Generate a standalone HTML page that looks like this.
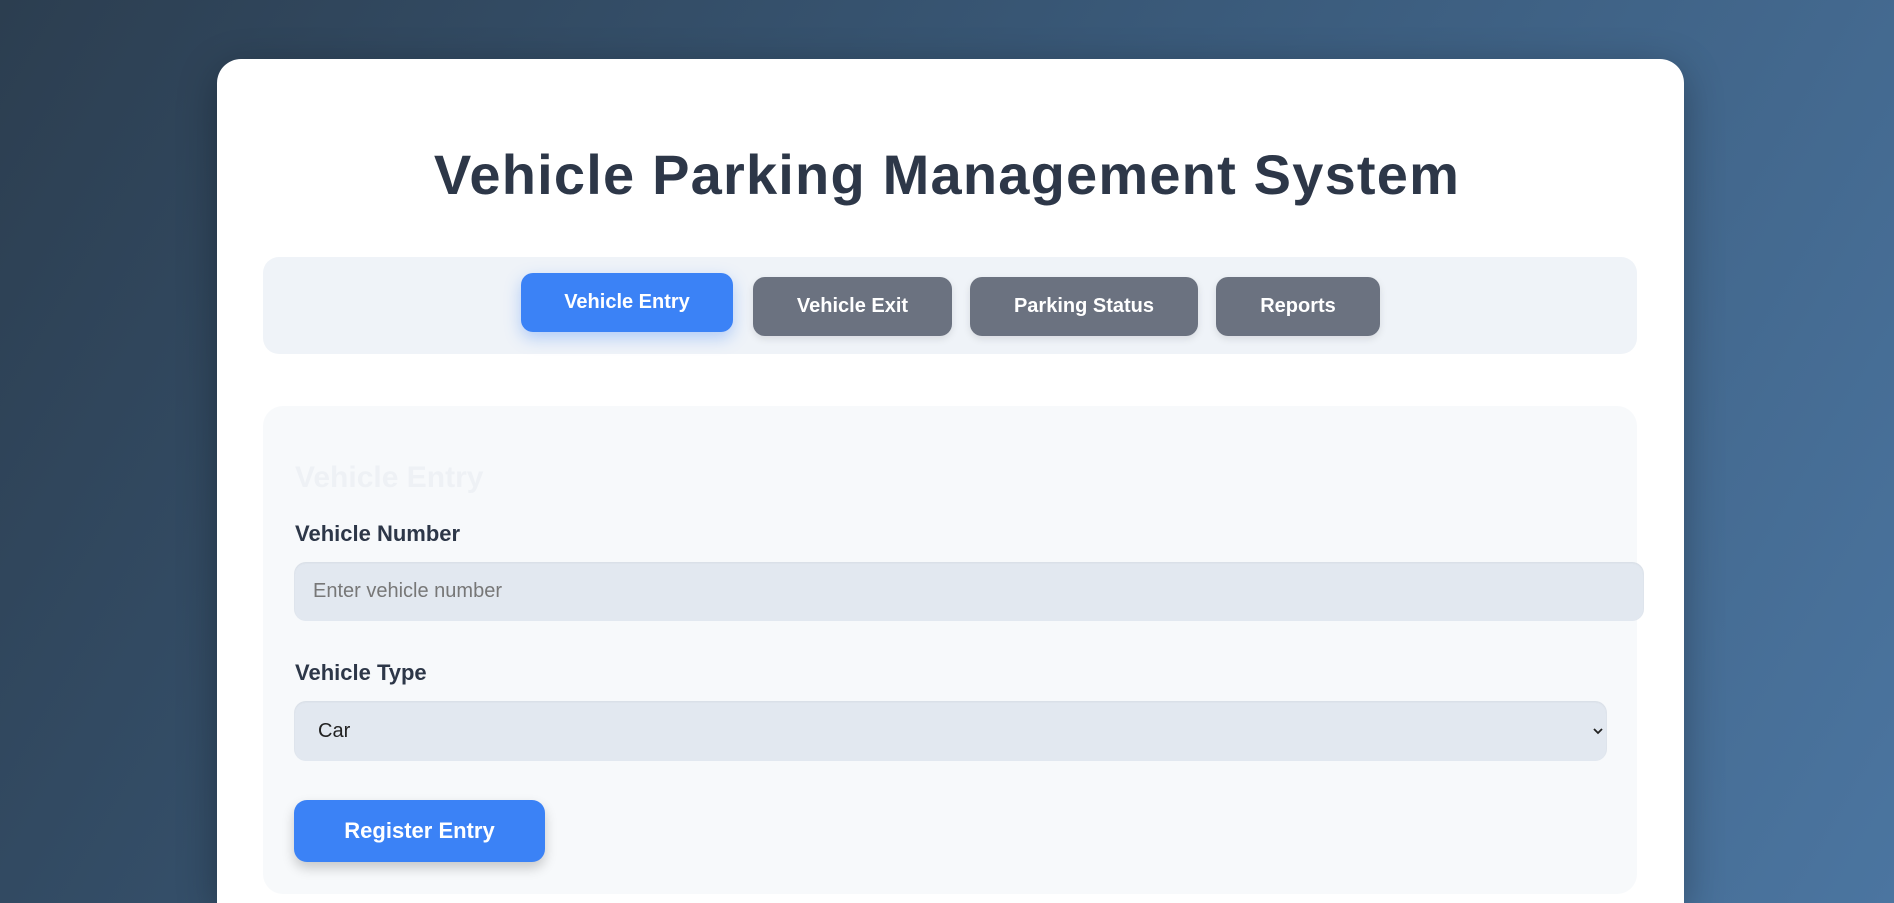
<!DOCTYPE html>
<html><head><meta charset="utf-8"><style>
*{box-sizing:border-box;margin:0;padding:0}
html,body{width:1894px;height:903px;overflow:hidden}
body{background:linear-gradient(120deg,#2c3e50 0%,#3a5a7a 50%,#4b75a0 100%);font-family:"Liberation Sans",Arial,sans-serif;position:relative}
.card{position:absolute;left:217px;top:59px;width:1467px;height:844px;background:#fff;border-radius:24px 24px 0 0;box-shadow:0 10px 40px rgba(0,0,0,.3)}
h1{position:absolute;left:0;right:0;top:140px;text-align:center;font-size:56px;font-weight:bold;color:#2d3748;letter-spacing:1.2px;line-height:70px}
.nav{position:absolute;left:263px;top:257px;width:1374px;height:97px;background:#eff3f8;border-radius:16px}
.btn{position:absolute;height:59px;border-radius:12px;background:#6b7280;color:#fff;font-weight:bold;font-size:20px;display:flex;align-items:center;justify-content:center;box-shadow:0 3px 8px rgba(0,0,0,.1)}
.act{background:#3b82f6;box-shadow:0 6px 16px rgba(59,130,246,.35)}
.panel{position:absolute;left:263px;top:406px;width:1374px;height:488px;background:#f7f9fb;border-radius:20px}
.h2{position:absolute;left:295px;top:461px;font-size:30px;font-weight:bold;color:#eef1f5}
.lbl{position:absolute;left:295px;font-size:22px;font-weight:bold;color:#2d3748}
.inp{position:absolute;left:294px;background:#e2e8f0;border-radius:12px;font-size:20px;display:flex;align-items:center;box-shadow:inset 0 1px 2px rgba(0,0,0,.05)}
.reg{position:absolute;left:294px;top:800px;width:251px;height:62px;background:#3b82f6;border-radius:13px;color:#fff;font-size:22px;font-weight:bold;display:flex;align-items:center;justify-content:center;box-shadow:0 6px 12px rgba(0,0,0,.2)}
</style></head><body>
<div class="card"></div>
<h1>Vehicle Parking Management System</h1>
<div class="nav"></div>
<div class="btn act" style="left:521px;top:273px;width:212px">Vehicle Entry</div>
<div class="btn" style="left:753px;top:277px;width:199px">Vehicle Exit</div>
<div class="btn" style="left:970px;top:277px;width:228px">Parking Status</div>
<div class="btn" style="left:1216px;top:277px;width:164px">Reports</div>
<div class="panel"></div>
<div class="h2">Vehicle Entry</div>
<div class="lbl" style="top:521px">Vehicle Number</div>
<div class="inp" style="top:562px;width:1350px;height:59px;padding-left:19px;color:#777">Enter vehicle number</div>
<div class="lbl" style="top:660px">Vehicle Type</div>
<div class="inp" style="top:701px;width:1313px;height:60px;padding-left:24px;color:#222;justify-content:space-between;padding-right:3px">Car<svg width="12" height="10" viewBox="0 0 12 10"><path d="M2 3l4 4 4-4" stroke="#222" stroke-width="1.8" fill="none"/></svg></div>
<div class="reg">Register Entry</div>
</body></html>
